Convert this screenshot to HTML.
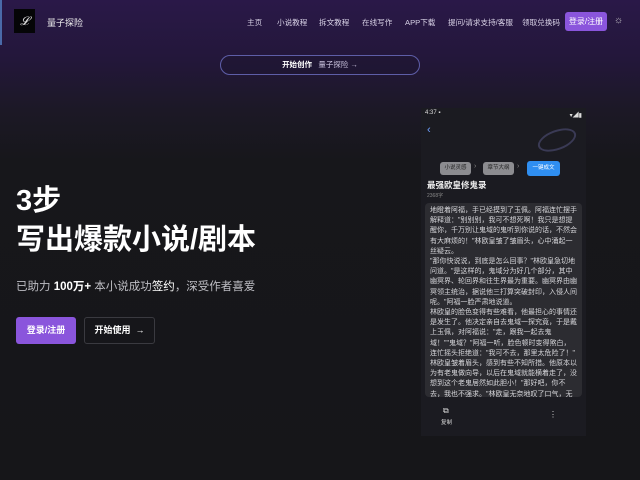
<!DOCTYPE html>
<html><head><meta charset="utf-8"><style>
*{margin:0;padding:0;box-sizing:border-box}
body{width:640px;height:480px;overflow:hidden;font-family:"Liberation Sans","Noto Sans CJK SC",sans-serif;color:#fff;
background:linear-gradient(180deg,#2a1848 0px,#23173a 60px,#1c1826 110px,#17171b 160px,#161619 480px);position:relative}
.abs{position:absolute}
.nav a{position:absolute;top:17px;font-size:7.6px;color:#d8d2e6;white-space:nowrap}
.ph{font-size:7px;line-height:10.2px;color:#d6d6da;overflow:hidden}
</style></head><body>
<div class="abs" style="left:0;top:0;width:2px;height:45px;background:#4a6aa8"></div>
<div class="abs" style="left:14px;top:9px;width:21px;height:24px;background:#050507;color:#ddd;font:italic 12px 'Liberation Serif',serif;text-align:center;line-height:24px">𝓛</div>
<div class="abs" style="left:47px;top:16px;font-size:9px;color:#eee">量子探险</div>
<div class="nav">
<a style="left:247px">主页</a><a style="left:277px">小说教程</a><a style="left:319px">拆文教程</a><a style="left:362px">在线写作</a><a style="left:405px">APP下载</a><a style="left:448px">提问/请求支持/客服</a><a style="left:522px">领取兑换码</a>
</div>
<div class="abs" style="left:565px;top:12px;width:42px;height:19px;background:#8a55dc;border-radius:3px;font-size:8px;text-align:center;line-height:19px">登录/注册</div>
<div class="abs" style="left:614px;top:15px;font-size:10px;color:#ccc">☼</div>
<div class="abs" style="left:220px;top:55px;width:200px;height:20px;border:1px solid #5e5ea8;border-radius:10px;font-size:7.5px;line-height:18px;text-align:center;background:rgba(30,22,50,.6)"><b style="color:#fff">开始创作</b>&nbsp;&nbsp;&nbsp;<span style="color:#c8c0dc">量子探险 →</span></div>
<div class="abs" style="left:16px;top:182px;font-size:29px;font-weight:bold;line-height:39px">3步<br>写出爆款小说/剧本</div>
<div class="abs" style="left:16px;top:278px;font-size:11.5px;color:#bdbdc3">已助力 <b style="color:#fff">100万+</b> 本小说成功<span style="color:#fff">签约</span>，深受作者喜爱</div>
<div class="abs" style="left:16px;top:317px;width:60px;height:27px;background:#8a55dc;border-radius:3px;font-size:9px;font-weight:bold;text-align:center;line-height:27px">登录/注册</div>
<div class="abs" style="left:84px;top:317px;width:71px;height:27px;border:1px solid #3a3a40;border-radius:3px;font-size:9px;font-weight:bold;text-align:center;line-height:25px">开始使用 &nbsp;→</div>
<div class="abs" style="left:421px;top:108px;width:165px;height:328px;background:#1b1b21">
 <div class="abs" style="left:4px;top:2px;font-size:6px;color:#ddd">4:37 ▪</div>
 <div class="abs" style="right:4px;top:2px;font-size:6px;color:#ddd">▾◢▮</div>
 <div class="abs" style="left:6px;top:16px;font-size:11px;color:#6fa0ff">‹</div>
 <div class="abs" style="left:116px;top:22px;width:40px;height:20px;border:2px solid #3a3a55;border-radius:50%;transform:rotate(-20deg)"></div>
 <div class="abs" style="left:19px;top:54px;width:31px;height:13px;background:#8c8c90;border-radius:3px;font-size:5.5px;color:#222;text-align:center;line-height:13px">小说灵感</div>
 <div class="abs" style="left:53px;top:55px;font-size:7px;color:#888">›</div>
 <div class="abs" style="left:62px;top:54px;width:31px;height:13px;background:#8c8c90;border-radius:3px;font-size:5.5px;color:#222;text-align:center;line-height:13px">章节大纲</div>
 <div class="abs" style="left:96px;top:55px;font-size:7px;color:#888">›</div>
 <div class="abs" style="left:106px;top:53px;width:33px;height:15px;background:#2f8ef0;border-radius:3px;font-size:5.5px;text-align:center;line-height:15px">一键成文</div>
 <div class="abs" style="left:6px;top:71px;font-size:8.5px;font-weight:bold;color:#eee">最强欧皇修鬼录</div>
 <div class="abs" style="left:6px;top:84px;font-size:5px;color:#888">2368字</div>
 <div class="abs ph" style="left:4px;top:95px;width:157px;height:194px;background:#2c2c31;border-radius:4px;padding:3px 5px">
 地瞪着阿福，手已经摸到了玉佩。阿福连忙摆手解释道："别别别，我可不想死啊！我只是想提醒你，千万别让鬼域的鬼听到你说的话，不然会有大麻烦的！"林欧皇皱了皱眉头，心中涌起一丝疑云。<br>"那你快说说，到底是怎么回事？"林欧皇急切地问道。"是这样的，鬼域分为好几个部分，其中幽冥界、轮回界和往生界最为重要。幽冥界由幽冥领主统治，据说他三打算突破封印，入侵人间呢。"阿福一脸严肃地说道。<br>林欧皇的脸色变得有些难看，他最担心的事情还是发生了。他决定亲自去鬼域一探究竟，于是戴上玉佩，对阿福说："走，跟我一起去鬼域！""鬼域？"阿福一听，脸色顿时变得煞白，连忙摇头拒绝道："我可不去，那里太危险了！"<br>林欧皇皱着眉头，感到有些不知所措。他原本以为有老鬼做向导，以后在鬼域就能横着走了，没想到这个老鬼居然如此胆小！"那好吧，你不去，我也不强求。"林欧皇无奈地叹了口气，无奈地看着阿福。<br>阿福尴尬地笑了笑，讨好地说："大人，您就原谅我吧，我只想安安稳稳地看个电视
 </div>
 <div class="abs" style="left:22px;top:298px;font-size:8px;color:#ddd">⧉</div>
 <div class="abs" style="left:20px;top:310px;font-size:5.5px;color:#ddd">复制</div>
 <div class="abs" style="left:128px;top:302px;font-size:8px;color:#ddd">⋮</div>
</div>
</body></html>
